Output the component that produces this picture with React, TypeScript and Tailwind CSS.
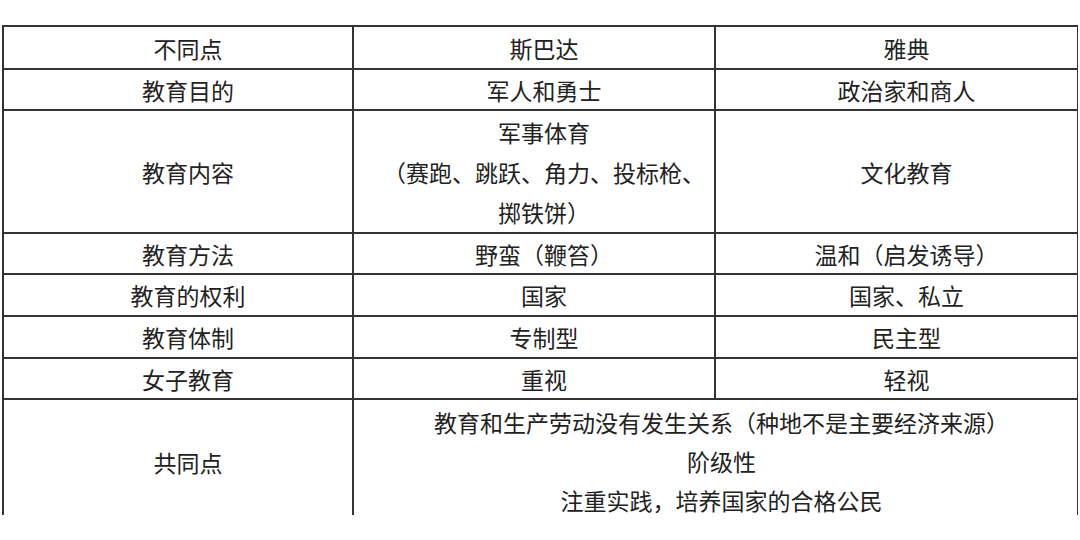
const rows: { label: string; sparta: string[]; athens: string[]; h: string }[] = [
  { label: '教育目的', sparta: ['军人和勇士'], athens: ['政治家和商人'], h: 'h-[41px]' },
  {
    label: '教育内容',
    sparta: ['军事体育', '（赛跑、跳跃、角力、投标枪、', '掷铁饼）'],
    athens: ['文化教育'],
    h: 'h-[123px]',
  },
  { label: '教育方法', sparta: ['野蛮（鞭笞）'], athens: ['温和（启发诱导）'], h: 'h-[41px]' },
  { label: '教育的权利', sparta: ['国家'], athens: ['国家、私立'], h: 'h-[42px]' },
  { label: '教育体制', sparta: ['专制型'], athens: ['民主型'], h: 'h-[42px]' },
  { label: '女子教育', sparta: ['重视'], athens: ['轻视'], h: 'h-[41px]' },
]

function Cell({ lines }: { lines: string[] }) {
  return (
    <td className="border-2 border-[#333] pl-5 text-center align-middle">
      {lines.map((l, i) => (
        <div key={i} className={lines.length > 1 ? 'leading-[40px]' : 'leading-[30px]'}>
          {l}
        </div>
      ))}
    </td>
  )
}

export default function App() {
  return (
    <div
      className="w-[1080px] h-[540px] bg-white overflow-hidden text-[#222] text-[23px]"
      style={{ fontFamily: '"Noto Sans CJK SC", "Noto Sans", sans-serif' }}
    >
      <div className="pt-[25px] pl-[2px]">
        {/* 表格下方被截断 */}
        <div className="h-[490px] overflow-hidden w-[1076px]">
          <table className="table-fixed border-collapse w-[1075px]">
            <colgroup>
              <col className="w-[350px]" />
              <col className="w-[362px]" />
              <col className="w-[363px]" />
            </colgroup>
            <tbody>
              <tr className="h-[43px]">
                <Cell lines={['不同点']} />
                <Cell lines={['斯巴达']} />
                <Cell lines={['雅典']} />
              </tr>
              {rows.map((r) => (
                <tr key={r.label} className={r.h}>
                  <Cell lines={[r.label]} />
                  <Cell lines={r.sparta} />
                  <Cell lines={r.athens} />
                </tr>
              ))}
              <tr className="h-[126px]">
                <Cell lines={['共同点']} />
                <td colSpan={2} className="border-2 border-[#333] pl-3 pt-[3px] text-center align-top">
                  <div className="leading-[39px]">教育和生产劳动没有发生关系（种地不是主要经济来源）</div>
                  <div className="leading-[39px]">阶级性</div>
                  <div className="mt-[7px] leading-[24px]">注重实践，培养国家的合格公民</div>
                </td>
              </tr>
            </tbody>
          </table>
        </div>
      </div>
    </div>
  )
}
